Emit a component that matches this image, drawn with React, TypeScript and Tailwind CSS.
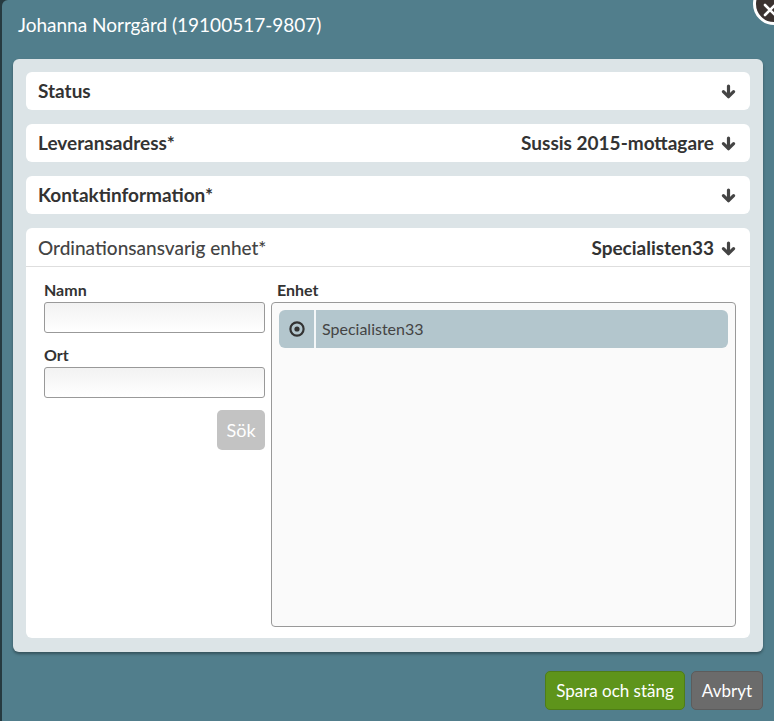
import React from 'react';

const font = { fontFamily: 'Lato, "Noto Sans", sans-serif' };

function ArrowDown() {
  return (
    <svg width="15" height="15" viewBox="0 0 15 15" className="text-[#444]">
      <path d="M7.5 2v10" stroke="currentColor" strokeWidth="3.2" strokeLinecap="round" />
      <path d="M2.4 7.6 7.5 12.7l5.1-5.1" stroke="currentColor" strokeWidth="3.2" fill="none" strokeLinecap="round" strokeLinejoin="round" />
    </svg>
  );
}

function SectionHeader({ title, value, bold = true }: { title: string; value?: string; bold?: boolean }) {
  return (
    <div className="flex h-[38px] items-center justify-between pl-3 pr-[14px]">
      <span className={`text-[19px] ${bold ? 'font-bold text-[#333]' : 'font-medium text-[#444]'}`}>{title}</span>
      <span className="flex items-center gap-[7px]">
        {value && <span className="text-[19px] font-bold text-[#333]">{value}</span>}
        <ArrowDown />
      </span>
    </div>
  );
}

export default function App() {
  return (
    <div className="h-[721px] w-[774px] overflow-hidden bg-[#263a40]" style={font}>
      <div className="relative ml-[2px] h-full rounded-tl-[6px] bg-[#517e8c]">
        {/* Close button */}
        <div className="absolute left-[751px] top-[-17px] flex h-[42px] w-[42px] items-center justify-center rounded-full border-[3px] border-white bg-[#3b3230]">
          <svg width="14" height="14" viewBox="0 0 14 14" className="-ml-[8px] mt-[12px]">
            <path d="M2 2l10 10M12 2 2 12" stroke="white" strokeWidth="2.6" strokeLinecap="round" />
          </svg>
        </div>

        <div className="flex h-[59px] items-start pl-4 pt-[13px]">
          <h1 className="text-[19px] leading-6 text-white">Johanna Norrgård (19100517-9807)</h1>
        </div>

        <div className="ml-[11px] w-[750px] rounded-[6px] bg-[#dce4e7] p-[13px] pb-[14px] shadow-[0_2px_3px_rgba(0,0,0,0.35)]">
          <div className="flex flex-col gap-[14px]">
            <div className="rounded-[6px] bg-white">
              <SectionHeader title="Status" />
            </div>
            <div className="rounded-[6px] bg-white">
              <SectionHeader title="Leveransadress*" value="Sussis 2015-mottagare" />
            </div>
            <div className="rounded-[6px] bg-white">
              <SectionHeader title="Kontaktinformation*" />
            </div>
            <div className="rounded-[6px] bg-white">
              <div className="h-[39px] border-b border-[#dedede] pt-px">
                <SectionHeader title="Ordinationsansvarig enhet*" value="Specialisten33" bold={false} />
              </div>
              <div className="flex gap-[6px] pb-[11px] pl-[18px] pr-[14px] pt-[14px]">
                <div className="flex w-[221px] flex-col">
                  <label className="h-[18px] text-[16px] font-bold leading-[18px] text-[#333]">Namn</label>
                  <input className="mt-[3px] h-[31px] rounded-[3px] border border-[#999] bg-gradient-to-b from-[#f2f2f2] to-white px-2 outline-none" />
                  <label className="mt-[13px] h-[18px] text-[16px] font-bold leading-[18px] text-[#333]">Ort</label>
                  <input className="mt-[3px] h-[31px] rounded-[3px] border border-[#999] bg-gradient-to-b from-[#f2f2f2] to-white px-2 outline-none" />
                  <button className="mt-3 h-10 w-12 self-end rounded-[5px] bg-[#c3c3c3] text-[18px] text-white">Sök</button>
                </div>
                <div className="flex flex-1 flex-col">
                  <label className="h-[18px] pl-[6px] text-[16px] font-bold leading-[18px] text-[#333]">Enhet</label>
                  <div className="mt-[3px] h-[325px] rounded-[4px] border border-[#999] bg-[#fafafa] p-[7px]">
                    <div className="flex h-[38px] overflow-hidden rounded-[6px] bg-[#b3c6cd]">
                      <div className="flex w-[35px] items-center justify-center">
                        <svg width="16" height="16" viewBox="0 0 16 16">
                          <circle cx="8" cy="8" r="6.6" fill="none" stroke="#333" strokeWidth="2.2" />
                          <circle cx="8" cy="8" r="2.6" fill="#333" />
                        </svg>
                      </div>
                      <div className="w-[2px] bg-[#f4f7f8]" />
                      <span className="flex items-center pl-[6px] text-[16px] text-[#444]">Specialisten33</span>
                    </div>
                  </div>
                </div>
              </div>
            </div>
          </div>
        </div>

        <div className="mr-[11px] mt-[19px] flex justify-end gap-[6px]">
          <button className="h-[39px] rounded-[5px] border border-[#4f7d17] bg-[#5e941b] px-[10px] text-[17px] text-white">Spara och stäng</button>
          <button className="h-[39px] rounded-[5px] border border-[#5c5c5c] bg-[#6b6b6b] px-[10px] text-[17px] text-white">Avbryt</button>
        </div>
      </div>
    </div>
  );
}
